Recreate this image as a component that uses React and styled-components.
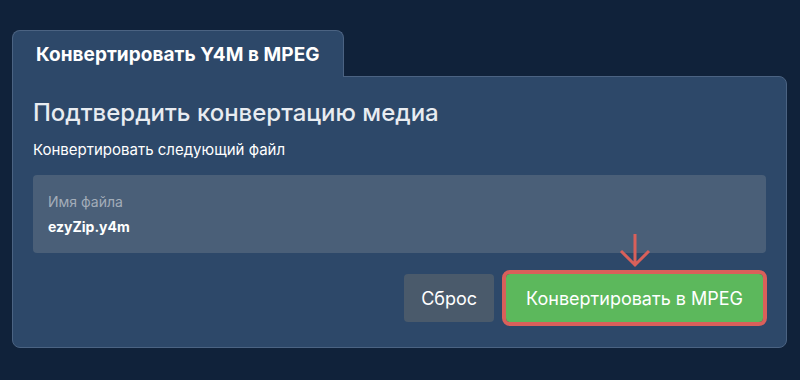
import React from 'react';
import styled, { createGlobalStyle } from 'styled-components';

const Global = createGlobalStyle`
  html, body {
    margin: 0;
    background: #10223a;
    font-family: Inter, "Noto Sans", sans-serif;
  }
`

const Page = styled.div`
  padding: 30px 13px 0 12px;
  width: 775px;
`
const Tab = styled.div`
  display: inline-flex;
  align-items: center;
  height: 46px;
  padding: 0 23px;
  width: 284px;
  background: #2d4869;
  border: 1px solid #4b6382;
  border-bottom: none;
  border-radius: 8px 8px 0 0;
  color: #fff;
  font-size: 19px;
  font-weight: 700;
  letter-spacing: 0.05px;
  white-space: nowrap;
  position: relative;
  z-index: 1;
  margin-bottom: -1px;
`
const Panel = styled.div`
  background: #2d4869;
  border: 1px solid #4b6382;
  border-radius: 0 8px 8px 8px;
  padding: 20px 20px 25px 20px;
  display: flex;
  flex-direction: column;
`
const Heading = styled.h1`
  margin: 0;
  color: #e8ecf1;
  font-size: 24px;
  font-weight: 500;
  line-height: 32px;
`
const Sub = styled.p`
  margin: 12px 0 0;
  color: #fff;
  font-size: 15px;
  line-height: 18px;
`
const Field = styled.div`
  margin-top: 16px;
  background: #4a5f78;
  border-radius: 4px;
  height: 78px;
  padding: 0 15px;
  display: flex;
  flex-direction: column;
  justify-content: center;
  gap: 8px;
`
const Label = styled.span`
  color: #a3adb9;
  font-size: 14px;
  line-height: 17px;
`
const Value = styled.span`
  color: #fff;
  font-size: 14px;
  font-weight: 700;
  line-height: 18px;
`
const Actions = styled.div`
  display: flex;
  justify-content: flex-end;
  gap: 12px;
  margin-top: 21px;
  padding-right: 3px;
`
const Button = styled.button`
  height: 48px;
  border: none;
  border-radius: 4px;
  font-family: inherit;
  font-size: 18px;
  color: #fff;
  padding: 0 ${p => p.$primary ? '20px' : '17px'};
  background: ${p => p.$primary ? '#5cb85c' : '#4a5a6b'};
  outline: ${p => p.$primary ? '4px solid #d9605a' : 'none'};
  position: relative;
  cursor: pointer;
`
const Arrow = styled.svg`
  position: absolute;
  left: 50%;
  top: -42px;
  transform: translateX(-50%);
`

export default function App() {
  return (
    <Page>
      <Global />
      <Tab>Конвертировать Y4M в MPEG</Tab>
      <Panel>
        <Heading>Подтвердить конвертацию медиа</Heading>
        <Sub>Конвертировать следующий файл</Sub>
        <Field>
          <Label>Имя файла</Label>
          <Value>ezyZip.y4m</Value>
        </Field>
        <Actions>
          <Button>Сброс</Button>
          <Button $primary>
            <Arrow width="32" height="36" viewBox="0 0 32 36">
              <path d="M16 2 V33 M2 19 L16 33 L30 19" fill="none" stroke="#d9605a" strokeWidth="3" />
            </Arrow>
            Конвертировать в MPEG
          </Button>
        </Actions>
      </Panel>
    </Page>
  );
}
